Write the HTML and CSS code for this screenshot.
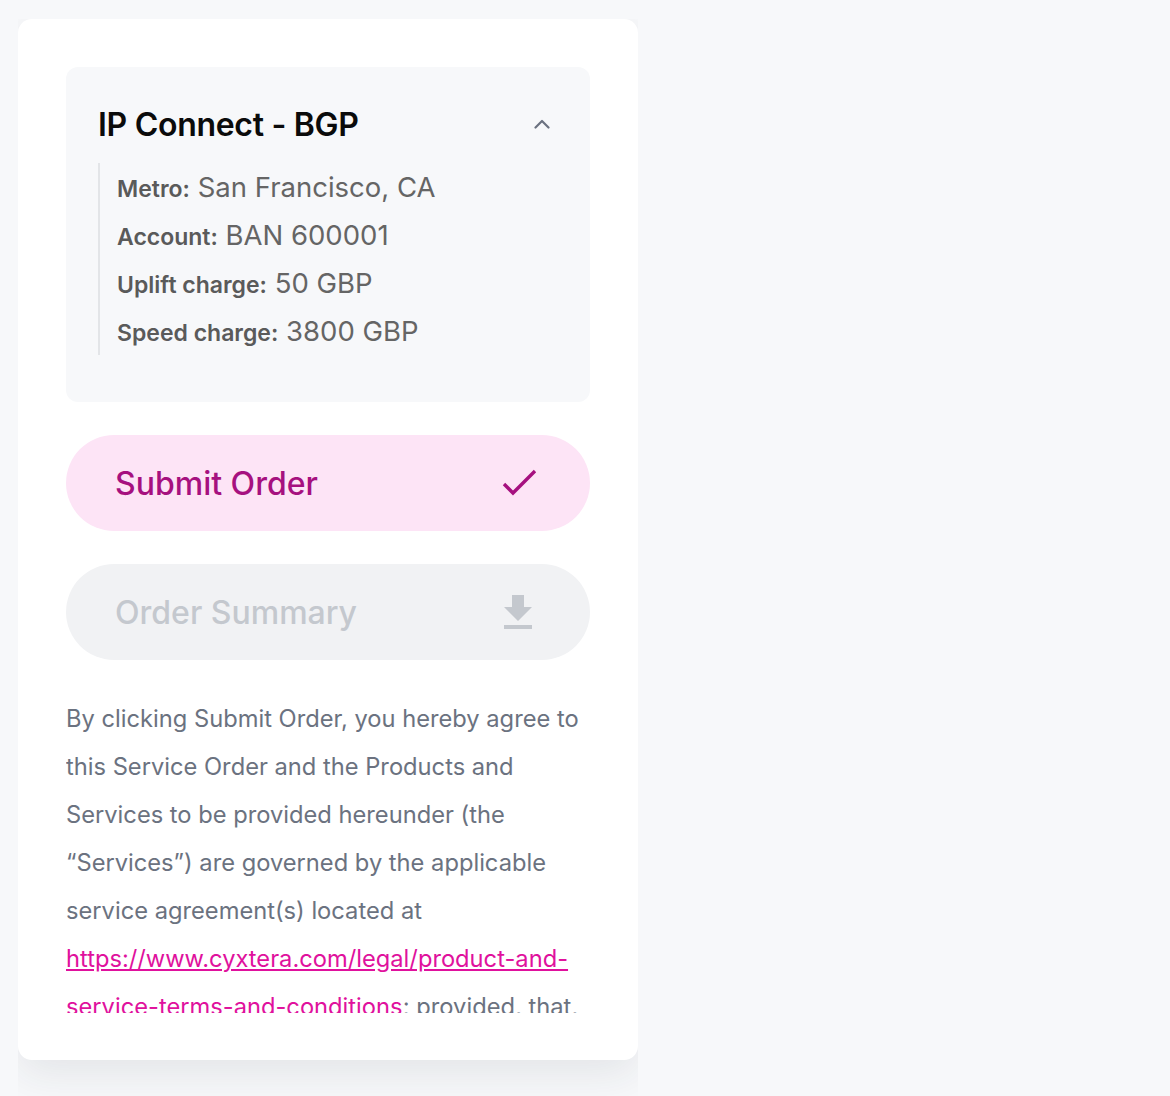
FILE: index.html
```html
<!DOCTYPE html>
<html lang="en">
<head>
<meta charset="utf-8">
<title>IP Connect - BGP</title>
<link rel="stylesheet" href="styles.css">
</head>
<body>
<div class="column">
  <div class="card">
    <section class="product">
      <div class="product-head">
        <h2 class="product-title">IP Connect - BGP</h2>
        <svg class="chevron" width="16" height="10" viewBox="0 0 16 10" aria-hidden="true"><path d="M1.5 8.5 L8 2 L14.5 8.5" fill="none" stroke="#6b7280" stroke-width="2.2" stroke-linecap="round" stroke-linejoin="round"/></svg>
      </div>
      <ul class="details">
        <li><span class="label">Metro:</span> San Francisco, CA</li>
        <li><span class="label">Account:</span> BAN 600001</li>
        <li><span class="label">Uplift charge:</span> 50 GBP</li>
        <li><span class="label">Speed charge:</span> 3800 GBP</li>
      </ul>
    </section>
    <button class="btn btn-submit" type="button">
      <span>Submit Order</span>
      <svg width="38" height="30" viewBox="0 0 38 30" aria-hidden="true"><path d="M3 16 L12 25 L34 3" fill="none" stroke="#a6107f" stroke-width="3.4"/></svg>
    </button>
    <button class="btn btn-summary" type="button" disabled>
      <span>Order Summary</span>
      <svg width="48" height="48" viewBox="0 0 24 24" aria-hidden="true"><path d="M19 9h-4V3H9v6H5l7 7 7-7zM5 18v2h14v-2H5z" fill="#c4c8ce"/></svg>
    </button>
    <div class="terms">
      <p>By clicking Submit Order, you hereby agree to this Service Order and the Products and Services to be provided hereunder (the “Services”) are governed by the applicable service agreement(s) located at <a href="#">https://www.cyxtera.com/legal/product-and-service-terms-and-conditions</a>; provided, that, to the extent that you have entered into a separate master agreement with Cyxtera, the terms of such agreement shall govern the Services.</p>
    </div>
  </div>
</div>
</body>
</html>
```
FILE: styles.css
```css
* { box-sizing: border-box; }
html, body { margin: 0; padding: 0; }
body {
  background: #f7f8fa;
  font-family: Inter, "Noto Sans", sans-serif;
  padding: 19px 0 0 18px;
}
.column {
  width: 620px;
  height: 1200px;
  overflow: hidden;
}
.card {
  background: #ffffff;
  border-radius: 14px;
  padding: 48px 48px 47px 48px;
  box-shadow: 0 14px 40px rgba(30, 40, 60, 0.09);
  display: flex;
  flex-direction: column;
}
.product {
  background: #f7f8fa;
  border-radius: 12px;
  padding: 35px 32px 47px 32px;
}
.product-head {
  display: flex;
  align-items: center;
  justify-content: space-between;
  margin-bottom: 15px;
}
.product-title {
  margin: 0;
  font-size: 32px;
  line-height: 46px;
  font-weight: 600;
  color: #0b0b0b;
  letter-spacing: -0.3px;
}
.chevron {
  margin-right: 8px;
  margin-top: -2px;
}
.details {
  list-style: none;
  margin: 0;
  padding: 0 0 0 17px;
  border-left: 2px solid #e3e5e8;
  font-size: 27.5px;
  line-height: 48px;
  color: #656565;
}
.details li { height: 48px; }
.label {
  font-size: 23px;
  line-height: 1;
  font-weight: 600;
  color: #5a5a5a;
}
.btn {
  font-family: inherit;
  border: none;
  border-radius: 48px;
  height: 96px;
  padding: 0 51px 0 49px;
  display: flex;
  align-items: center;
  justify-content: space-between;
  font-size: 32px;
  font-weight: 500;
  text-align: left;
}
.btn-submit {
  margin-top: 33px;
  background: #fde4f6;
  color: #a6107f;
}
.btn-summary {
  margin-top: 33px;
  background: #f1f2f4;
  color: #c4c8ce;
}
.btn-summary svg { margin-right: -3px; margin-top: 2px; }
.terms {
  margin-top: 35px;
  height: 318px;
  overflow: hidden;
}
.terms p {
  margin: 0;
  font-size: 23.7px;
  line-height: 48px;
  color: #6b7280;
}
.terms a {
  color: #e0119d;
  text-decoration: underline;
}
```
